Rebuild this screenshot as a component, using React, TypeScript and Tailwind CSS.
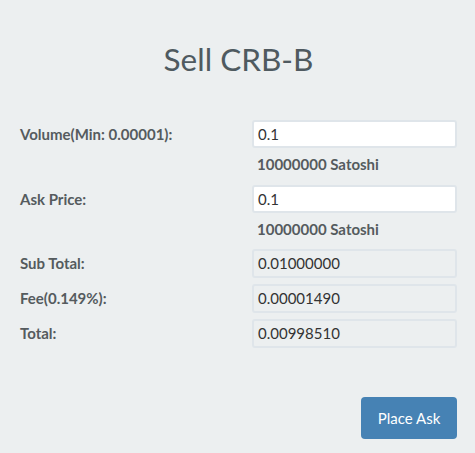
import React from "react";

const labelCls = "text-[15px] font-bold text-[#555b5e]";

export default function App() {
  return (
    <div
      className="w-[475px] h-[453px] bg-[#eceff0] pl-[20px] pr-[18px]"
      style={{ fontFamily: "Lato, 'Open Sans', sans-serif" }}
    >
      <div className="pt-[39px] h-[80px] text-center text-[31.5px] leading-[40px] text-[#4f5a60]">
        Sell CRB-B
      </div>
      <div className="mt-[40px] flex flex-col">
        <div className="flex items-center h-[28px]">
          <div className={`${labelCls} w-[232px]`}>Volume(Min: 0.00001):</div>
          <div className="flex-1 h-[28px] bg-white border-2 border-[#dfe5ea] rounded-[3px] px-[4px] flex items-center text-[15px] text-[#333]">
            0.1
          </div>
        </div>
        <div className="ml-[237px] mt-[6px] mb-[11px] leading-[20px] text-[15px] font-bold text-[#555b5e]">
          10000000 Satoshi
        </div>
        <div className="flex items-center h-[28px]">
          <div className={`${labelCls} w-[232px]`}>Ask Price:</div>
          <div className="flex-1 h-[28px] bg-white border-2 border-[#dfe5ea] rounded-[3px] px-[4px] flex items-center text-[15px] text-[#333]">
            0.1
          </div>
        </div>
        <div className="ml-[237px] mt-[6px] mb-[10px] leading-[20px] text-[15px] font-bold text-[#555b5e]">
          10000000 Satoshi
        </div>
        <div className="flex flex-col gap-[6px]">
          {[
            ["Sub Total:", "0.01000000"],
            ["Fee(0.149%):", "0.00001490"],
            ["Total:", "0.00998510"],
          ].map(([l, v]) => (
            <div key={l} className="flex items-center h-[29px]">
              <div className={`${labelCls} w-[232px]`}>{l}</div>
              <div className="flex-1 h-[29px] border-2 border-[#dfe5ea] rounded-[3px] px-[4px] flex items-center text-[15px] text-[#333]">
                {v}
              </div>
            </div>
          ))}
        </div>
        <div className="mt-[49px] flex justify-end">
          <button className="w-[96px] h-[42px] bg-[#4682b4] rounded-[4px] text-white text-[15px]">
            Place Ask
          </button>
        </div>
      </div>
    </div>
  );
}
